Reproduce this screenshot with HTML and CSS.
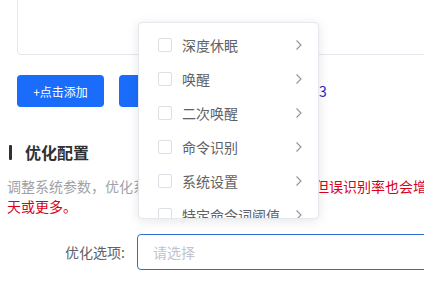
FILE: index.html
```html
<!DOCTYPE html>
<html lang="zh">
<head>
<meta charset="utf-8">
<link rel="stylesheet" href="styles.css">
</head>
<body>
<div class="page">
  <div class="editor-box"></div>
  <div class="actions">
    <button class="btn">+点击添加</button>
    <button class="btn">批量导入</button>
    <span class="count">已选命令词数：3</span>
  </div>
  <h2 class="section-title"><span class="bar"></span>优化配置</h2>
  <p class="desc"><span class="gray">调整系统参数，优化系统的识别效果，提高灵敏度</span><span class="red">但误识别率也会增加，建议持续观察一两天或更多。</span></p>
  <div class="form-row">
    <label class="form-label">优化选项:</label>
    <div class="select">请选择</div>
  </div>
</div>

<div class="dropdown">
  <ul class="menu">
    <li class="item"><span class="check"></span><span class="label">深度休眠</span><svg class="chev" viewBox="0 0 8 12"><path d="M1.5 1.5 L6 6 L1.5 10.5" fill="none" stroke="#909399" stroke-width="1.1"/></svg></li>
    <li class="item"><span class="check"></span><span class="label">唤醒</span><svg class="chev" viewBox="0 0 8 12"><path d="M1.5 1.5 L6 6 L1.5 10.5" fill="none" stroke="#909399" stroke-width="1.1"/></svg></li>
    <li class="item"><span class="check"></span><span class="label">二次唤醒</span><svg class="chev" viewBox="0 0 8 12"><path d="M1.5 1.5 L6 6 L1.5 10.5" fill="none" stroke="#909399" stroke-width="1.1"/></svg></li>
    <li class="item"><span class="check"></span><span class="label">命令识别</span><svg class="chev" viewBox="0 0 8 12"><path d="M1.5 1.5 L6 6 L1.5 10.5" fill="none" stroke="#909399" stroke-width="1.1"/></svg></li>
    <li class="item"><span class="check"></span><span class="label">系统设置</span><svg class="chev" viewBox="0 0 8 12"><path d="M1.5 1.5 L6 6 L1.5 10.5" fill="none" stroke="#909399" stroke-width="1.1"/></svg></li>
    <li class="item"><span class="check"></span><span class="label">特定命令词阈值</span><svg class="chev" viewBox="0 0 8 12"><path d="M1.5 1.5 L6 6 L1.5 10.5" fill="none" stroke="#909399" stroke-width="1.1"/></svg></li>
  </ul>
  <span class="arrow"></span>
</div>
</body>
</html>
```
FILE: styles.css
```css
html, body {
  margin: 0;
  padding: 0;
  overflow: hidden;
  background: #fff;
  font-family: "Noto Sans CJK SC", "Noto Sans", sans-serif;
}

.page {
  width: 640px;
  position: relative;
}

.editor-box {
  box-sizing: border-box;
  margin-left: 17px;
  margin-top: -40px;
  height: 95px;
  border: 1px solid #e4e7ed;
  border-radius: 0 0 4px 4px;
}

.actions {
  display: flex;
  align-items: center;
  margin: 20px 0 0 17px;
}

.btn {
  box-sizing: border-box;
  width: 87px;
  height: 32px;
  border: none;
  border-radius: 4px;
  background: #1a6dfb;
  color: #fff;
  font-family: inherit;
  font-size: 12px;
  padding: 0;
  margin-right: 15px;
}

.count {
  font-size: 14px;
  color: #1f1fc8;
  font-family: "Noto Sans CJK SC", sans-serif;
}

.section-title {
  display: flex;
  align-items: center;
  margin: 33px 0 0 9px;
  height: 24px;
  font-size: 16px;
  font-weight: bold;
  color: #303133;
}

.bar {
  width: 3px;
  height: 15px;
  background: #303133;
  margin-right: 13px;
  border-radius: 1px;
}

.desc {
  margin: 12px 0 0 7px;
  width: 565px;
  font-size: 14px;
  line-height: 20px;
}

.gray { color: #a0a2a8; }
.red { color: #d9001b; }

.form-row {
  display: flex;
  align-items: center;
  margin-top: 18px;
}

.form-label {
  width: 125px;
  padding-right: 12px;
  text-align: right;
  font-size: 14px;
  color: #606266;
}

.select {
  box-sizing: border-box;
  width: 320px;
  height: 36px;
  border: 1px solid #2f6bd0;
  border-radius: 4px;
  padding-left: 15px;
  font-size: 14px;
  line-height: 34px;
  color: #c0c4cc;
}

.dropdown {
  position: absolute;
  left: 138px;
  top: 22px;
  width: 181px;
  height: 197px;
  box-sizing: border-box;
  background: #fff;
  border: 1px solid #e4e7ed;
  border-radius: 4px;
  box-shadow: 0 2px 12px rgba(0, 0, 0, 0.1);
}

.menu {
  list-style: none;
  margin: 0;
  padding: 5px 0 0;
  height: 100%;
  box-sizing: border-box;
  overflow: hidden;
  border-radius: 4px;
}

.item {
  display: flex;
  align-items: center;
  height: 34px;
  padding: 0 15px 0 19px;
  font-size: 14px;
  color: #606266;
}

.check {
  box-sizing: border-box;
  width: 14px;
  height: 14px;
  border: 1px solid #dcdfe6;
  border-radius: 2px;
  margin-right: 10px;
  flex: none;
}

.label {
  flex: 1;
  white-space: nowrap;
}

.chev {
  width: 8px;
  height: 12px;
  flex: none;
}

.arrow {
  position: absolute;
  left: 38px;
  bottom: -6px;
  width: 0;
  height: 0;
  border-left: 6px solid transparent;
  border-right: 6px solid transparent;
  border-top: 6px solid #ebedf0;
}
```
